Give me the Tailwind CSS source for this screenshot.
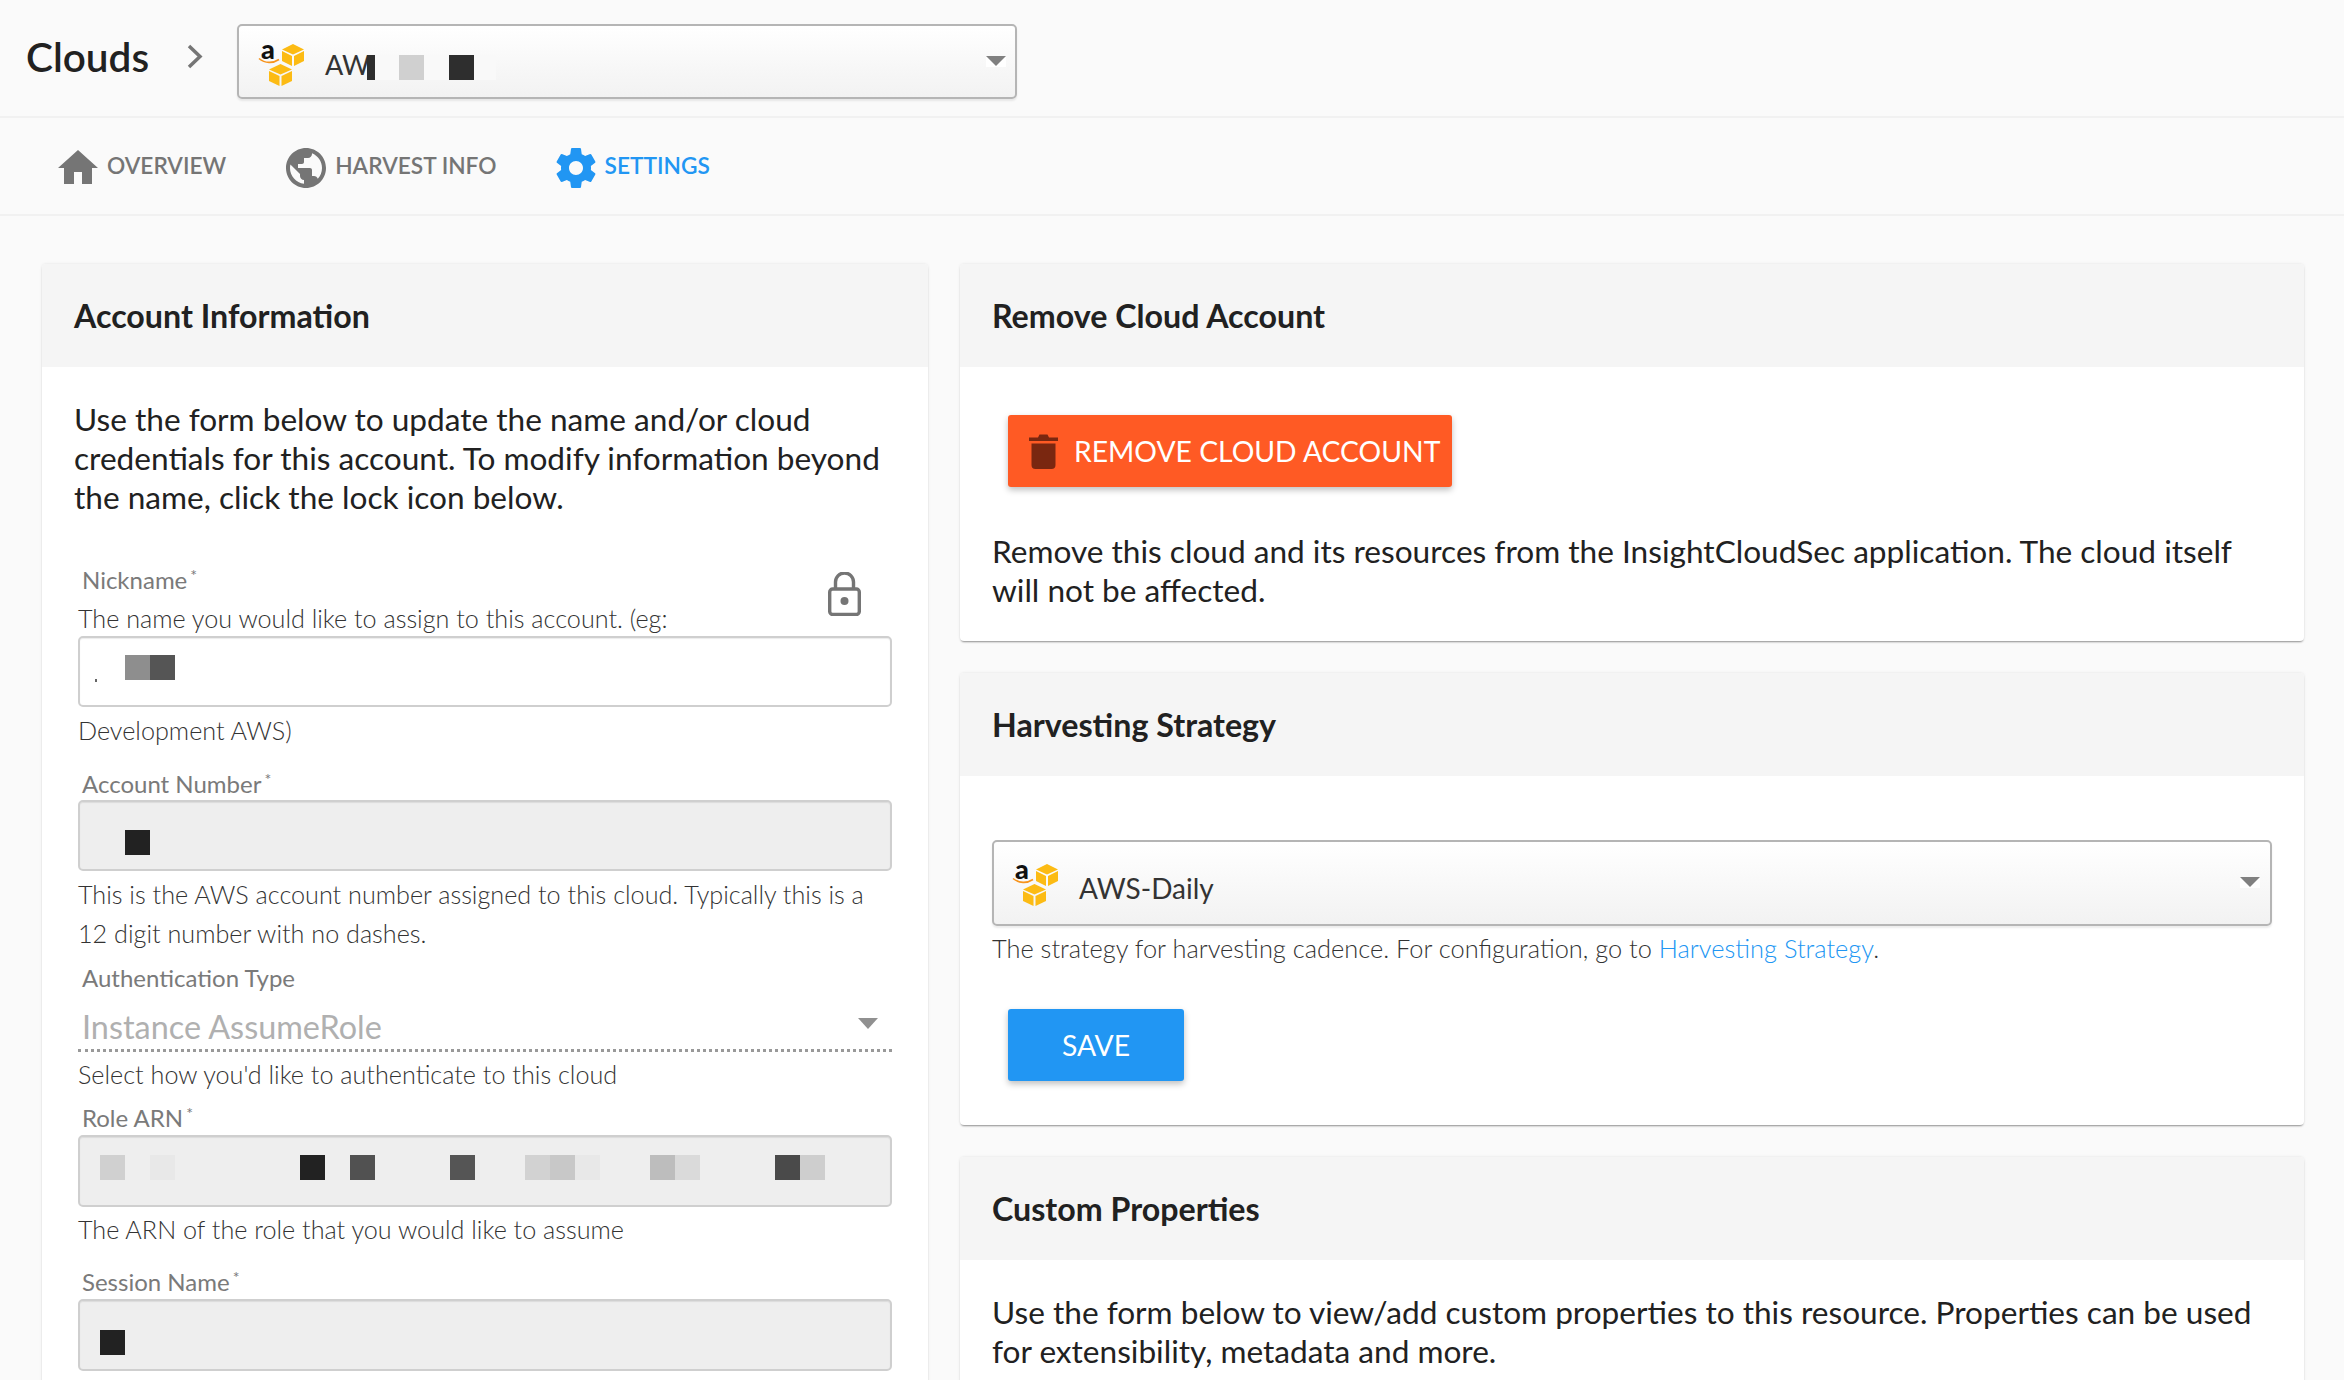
<!DOCTYPE html>
<html lang="en">
<head>
    <meta charset="UTF-8">
    <script src="https://cdn.jsdelivr.net/npm/@tailwindcss/browser@4"></script>
    <title>Clouds | Settings</title>
</head>
<body class="bg-[#fafafa] font-['Lato',sans-serif] text-[#212121]">
<div class="h-[1380px] overflow-hidden">
    <!-- top bar -->
    <div class="h-[118px] border-b-2 border-[#f1f1f1] flex items-center pb-[2px]">
        <h1 class="ml-[26px] w-[161px] text-[40.500px] font-semibold leading-none text-[#212121]">Clouds</h1>
        <svg class="w-[16px] h-[25px] -mt-[2px]" viewBox="0 0 16 25"><path d="M2 2l11 10.5L2 23" fill="none" stroke="#757575" stroke-width="3.5"/></svg>
        <div class="ml-[34px] w-[780px] h-[75px] self-start mt-[24px] border-2 border-[#b5b5b5] rounded-[5px] bg-linear-to-b from-white to-[#f2f2f2] shadow-[0_2px_2px_rgba(0,0,0,0.08)] flex items-start relative">
            <svg class="mt-[17px] ml-[19px] w-[46px] h-[44px] overflow-visible" viewBox="0 0 46 44">
                <text x="3" y="16" font-family="Lato" font-weight="900" font-size="27" fill="#111">a</text>
                <path d="M1 15.500c6 5 14 5 20 1" fill="none" stroke="#f7941d" stroke-width="1.6"/>
                <g fill="#fcbb14"><polygon points="35,1 46,6.500 35,11.500 24,6.500"/><polygon points="24,8 34,13 34,23 24,18"/><polygon points="46,8 36,13 36,23 46,18"/></g>
                <g fill="#fcbb14"><polygon points="22.500,21 34,26.500 22.500,31.500 11,26.500"/><polygon points="11,28 21.500,33 21.500,43 11,38"/><polygon points="34,28 23.500,33 23.500,43 34,38"/></g>
            </svg>
            <span class="ml-[21px] mt-[22px] text-[27px] leading-[34px] text-[#333] w-[42px]">AW</span>
            <div class="mt-[29px] flex h-[25px] w-[129px] bg-[#f9f9f9] relative">
                <i class="block w-[8px] bg-[#2e2e2e]"></i>
                <i class="block ml-[24px] w-[25px] bg-[#d0d0d0]"></i>
                <i class="block ml-[25px] w-[25px] bg-[#2e2e2e]"></i>
            </div>
            <div class="absolute right-[9px] top-[30px] w-[20px] h-[11px] bg-white">
                <svg class="w-[20px] h-[11px]" viewBox="0 0 20 11"><path d="M0 0h20L10 10z" fill="#808080"/></svg>
            </div>
        </div>
    </div>

    <!-- tabs -->
    <nav class="h-[98px] border-b-2 border-[#f1f1f1] flex items-start pl-[54px] text-[22.700px] font-semibold text-[#757575]">
        <a class="flex items-center mt-[26px]">
            <svg class="w-[48px] h-[48px]" viewBox="0 0 24 24" fill="#757575"><path d="M10 20v-6h4v6h5v-8h3L12 3 2 12h3v8z"/></svg>
            <span class="ml-[5px] -mt-[4px]">OVERVIEW</span>
        </a>
        <a class="flex items-center mt-[26px] ml-[56px]">
            <svg class="w-[48px] h-[48px]" viewBox="0 0 24 24" fill="#757575"><path d="M12 2C6.48 2 2 6.48 2 12s4.48 10 10 10 10-4.48 10-10S17.52 2 12 2zm-1 17.93c-3.95-.49-7-3.85-7-7.93 0-.62.08-1.21.21-1.79L9 15v1c0 1.1.9 2 2 2v1.93zm6.9-2.54c-.26-.81-1-1.39-1.9-1.39h-1v-3c0-.55-.45-1-1-1H8v-2h2c.55 0 1-.45 1-1V7h2c1.1 0 2-.9 2-2v-.41c2.93 1.19 5 4.06 5 7.41 0 2.08-.8 3.97-2.1 5.39z"/></svg>
            <span class="ml-[5px] -mt-[4px]">HARVEST INFO</span>
        </a>
        <a class="flex items-center mt-[26px] ml-[55px] text-[#2196f3]">
            <svg class="w-[48px] h-[48px]" viewBox="0 0 24 24" fill="#2196f3"><path d="M19.43 12.98c.04-.32.07-.64.07-.98s-.03-.66-.07-.98l2.11-1.65c.19-.15.24-.42.12-.64l-2-3.46c-.12-.22-.39-.3-.61-.22l-2.49 1c-.52-.4-1.08-.73-1.69-.98l-.38-2.65C14.46 2.18 14.25 2 14 2h-4c-.25 0-.46.18-.49.42l-.38 2.65c-.61.25-1.17.59-1.69.98l-2.49-1c-.23-.09-.49 0-.61.22l-2 3.46c-.13.22-.07.49.12.64l2.11 1.65c-.04.32-.07.65-.07.98s.03.66.07.98l-2.11 1.65c-.19.15-.24.42-.12.64l2 3.46c.12.22.39.3.61.22l2.49-1c.52.4 1.08.73 1.69.98l.38 2.65c.03.24.24.42.49.42h4c.25 0 .46-.18.49-.42l.38-2.65c.61-.25 1.17-.59 1.69-.98l2.49 1c.23.09.49 0 .61-.22l2-3.46c.12-.22.07-.49-.12-.64l-2.11-1.65zM12 15.5c-1.93 0-3.5-1.57-3.5-3.5s1.57-3.5 3.5-3.5 3.5 1.57 3.5 3.5-1.57 3.5-3.5 3.5z"/></svg>
            <span class="ml-[5px] -mt-[4px]">SETTINGS</span>
        </a>
    </nav>

    <main class="grid grid-cols-[886px_1344px] gap-x-[32px] pl-[42px] pt-[48px] items-start">
        <!-- left column -->
        <section class="bg-white rounded-[4px] shadow-[0_2px_2px_-1px_rgba(0,0,0,0.4),0_0_3px_rgba(0,0,0,0.1)]">
            <div class="h-[103px] bg-[#f5f5f5] rounded-t-[4px] pl-[32px] pt-[2px] flex items-center text-[32.200px] font-bold">Account Information</div>
            <div class="pt-[33px] pl-[32px] pr-[32px] pb-[40px]">
                <p class="text-[31.600px] leading-[39px]">Use the form below to update the name and/or cloud credentials for this account. To modify information beyond the name, click the lock icon below.</p>

                <div class="relative mt-[50px] ml-[4px] w-[814px]">
                    <svg class="absolute right-[31px] top-[5px] w-[33px] h-[44px]" viewBox="0 0 33 44">
                        <path d="M7.500 17V10a9 9 0 0 1 18 0v7" fill="none" stroke="#757575" stroke-width="3.400"/>
                        <rect x="1.700" y="17" width="29.600" height="25.500" rx="3" fill="none" stroke="#757575" stroke-width="3.400"/>
                        <circle cx="16.500" cy="29" r="4" fill="#757575"/>
                    </svg>
                    <label class="block pl-[4px] h-[26px] leading-[26px] text-[24px] text-[#7a7a7a]">Nickname<sup class="text-[16px] ml-[3px]">*</sup></label>
                    <p class="mt-[8px] h-[34px] leading-[34px] text-[25.200px] font-light text-[#333]">The name you would like to assign to this account. (eg:</p>
                    <div class="mt-[1px] h-[71px] border-2 border-[#cfcfcf] rounded-[5px] bg-white shadow-[inset_0_1px_1px_rgba(0,0,0,0.08)] flex items-start relative">
                        <i class="block mt-[41px] ml-[15px] w-[2px] h-[3px] bg-[#666]"></i>
                        <i class="block mt-[17px] ml-[28px] w-[25px] h-[25px] bg-[#8e8e8e]"></i>
                        <i class="block mt-[17px] w-[25px] h-[25px] bg-[#555]"></i>
                    </div>
                    <p class="mt-[4px] h-[39px] leading-[39px] text-[25.200px] font-light text-[#333]">Development AWS)</p>

                    <label class="block mt-[21px] pl-[4px] h-[26px] leading-[26px] text-[24px] text-[#7a7a7a]">Account Number<sup class="text-[16px] ml-[3px]">*</sup></label>
                    <div class="mt-[3px] h-[71px] border-2 border-[#cfcfcf] rounded-[5px] bg-[#eeeeee] shadow-[inset_0_1px_1px_rgba(0,0,0,0.08)] flex items-start">
                        <i class="block mt-[28px] ml-[45px] w-[25px] h-[25px] bg-[#222]"></i>
                    </div>
                    <p class="mt-[4px] leading-[39px] text-[25.200px] font-light text-[#333]">This is the AWS account number assigned to this cloud. Typically this is a<br>12 digit number with no dashes.</p>

                    <label class="block mt-[12px] pl-[4px] h-[26px] leading-[26px] text-[24px] text-[#7a7a7a]">Authentication Type</label>
                    <div class="mt-[16px] h-[45px] border-b-[3px] border-dotted border-[#999] flex items-start justify-between pl-[4px] pr-[14px]">
                        <span class="text-[32.400px] leading-[40px] text-[#b0b0b0]">Instance AssumeRole</span>
                        <svg class="mt-[11px] w-[20px] h-[11px]" viewBox="0 0 20 11"><path d="M0 0h20L10 11z" fill="#909090"/></svg>
                    </div>
                    <p class="mt-[3px] h-[39px] leading-[39px] text-[25.200px] font-light text-[#333]">Select how you'd like to authenticate to this cloud</p>

                    <label class="block mt-[11px] pl-[4px] h-[26px] leading-[26px] text-[24px] text-[#7a7a7a]">Role ARN<sup class="text-[16px] ml-[3px]">*</sup></label>
                    <div class="mt-[4px] h-[72px] border-2 border-[#cfcfcf] rounded-[5px] bg-[#eeeeee] shadow-[inset_0_1px_1px_rgba(0,0,0,0.08)] flex items-start pt-[18px] pl-[20px]">
                        <i class="block w-[25px] h-[25px] bg-[#d0d0d0]"></i>
                        <i class="block ml-[25px] w-[25px] h-[25px] bg-[#e8e8e8]"></i>
                        <i class="block ml-[125px] w-[25px] h-[25px] bg-[#222]"></i>
                        <i class="block ml-[25px] w-[25px] h-[25px] bg-[#515151]"></i>
                        <i class="block ml-[75px] w-[25px] h-[25px] bg-[#555]"></i>
                        <i class="block ml-[50px] w-[25px] h-[25px] bg-[#d2d2d2]"></i>
                        <i class="block w-[25px] h-[25px] bg-[#c8c8c8]"></i>
                        <i class="block w-[25px] h-[25px] bg-[#e8e8e8]"></i>
                        <i class="block ml-[50px] w-[25px] h-[25px] bg-[#bdbdbd]"></i>
                        <i class="block w-[25px] h-[25px] bg-[#dadada]"></i>
                        <i class="block ml-[75px] w-[25px] h-[25px] bg-[#4a4a4a]"></i>
                        <i class="block w-[25px] h-[25px] bg-[#cecece]"></i>
                    </div>
                    <p class="mt-[3px] h-[39px] leading-[39px] text-[25.200px] font-light text-[#333]">The ARN of the role that you would like to assume</p>

                    <label class="block mt-[20px] pl-[4px] h-[26px] leading-[26px] text-[24px] text-[#7a7a7a]">Session Name<sup class="text-[16px] ml-[3px]">*</sup></label>
                    <div class="mt-[4px] h-[72px] border-2 border-[#cfcfcf] rounded-[5px] bg-[#eeeeee] shadow-[inset_0_1px_1px_rgba(0,0,0,0.08)] flex items-start pt-[29px] pl-[20px]">
                        <i class="block w-[25px] h-[25px] bg-[#222]"></i>
                    </div>
                </div>
            </div>
        </section>

        <!-- right column -->
        <div class="flex flex-col gap-[32px]">
            <section class="bg-white rounded-[4px] shadow-[0_2px_2px_-1px_rgba(0,0,0,0.4),0_0_3px_rgba(0,0,0,0.1)]">
                <div class="h-[103px] bg-[#f5f5f5] rounded-t-[4px] pl-[32px] pt-[2px] flex items-center text-[32.200px] font-bold">Remove Cloud Account</div>
                <div class="pt-[48px] pl-[32px] pr-[32px] pb-[31px]">
                    <button class="ml-[16px] w-[444px] h-[72px] bg-[#ff5a24] rounded-[3px] shadow-[0_3px_6px_rgba(0,0,0,0.25)] flex items-center pl-[21px] text-white text-[28.300px] whitespace-nowrap">
                        <svg class="w-[29px] h-[36px] shrink-0" viewBox="0 0 29 36" fill="#7a2710"><path d="M0 4.500h9L10.500 1.500h8L20 4.500h9V8H0zM2.500 10.500h24V32a4 4 0 0 1-4 4h-16a4 4 0 0 1-4-4z"/></svg>
                        <span class="ml-[16px]">REMOVE CLOUD ACCOUNT</span>
                    </button>
                    <p class="mt-[45px] text-[31.600px] leading-[39px]">Remove this cloud and its resources from the InsightCloudSec application. The cloud itself will not be affected.</p>
                </div>
            </section>

            <section class="bg-white rounded-[4px] shadow-[0_2px_2px_-1px_rgba(0,0,0,0.4),0_0_3px_rgba(0,0,0,0.1)]">
                <div class="h-[103px] bg-[#f5f5f5] rounded-t-[4px] pl-[32px] pt-[2px] flex items-center text-[32.200px] font-bold">Harvesting Strategy</div>
                <div class="pt-[64px] pl-[32px] pr-[32px] pb-[44px]">
                    <div class="h-[86px] border-2 border-[#b5b5b5] rounded-[5px] bg-linear-to-b from-white to-[#f2f2f2] shadow-[0_2px_2px_rgba(0,0,0,0.08)] flex items-start relative">
                        <svg class="mt-[21px] ml-[18px] w-[46px] h-[44px] overflow-visible" viewBox="0 0 46 44">
                            <text x="3" y="16" font-family="Lato" font-weight="900" font-size="27" fill="#111">a</text>
                            <path d="M1 15.500c6 5 14 5 20 1" fill="none" stroke="#f7941d" stroke-width="1.6"/>
                            <g fill="#fcbb14"><polygon points="35,1 46,6.500 35,11.500 24,6.500"/><polygon points="24,8 34,13 34,23 24,18"/><polygon points="46,8 36,13 36,23 46,18"/></g>
                            <g fill="#fcbb14"><polygon points="22.500,21 34,26.500 22.500,31.500 11,26.500"/><polygon points="11,28 21.500,33 21.500,43 11,38"/><polygon points="34,28 23.500,33 23.500,43 34,38"/></g>
                        </svg>
                        <span class="ml-[21px] mt-[29px] text-[28px] leading-[34px] text-[#333]">AWS-Daily</span>
                        <div class="absolute right-[10px] top-[35px] w-[20px] h-[11px] bg-white">
                            <svg class="w-[20px] h-[11px]" viewBox="0 0 20 11"><path d="M0 0h20L10 10z" fill="#808080"/></svg>
                        </div>
                    </div>
                    <p class="mt-[3px] h-[39px] leading-[39px] text-[25.400px] font-light text-[#333]">The strategy for harvesting cadence. For configuration, go to <a class="text-[#2196f3]">Harvesting Strategy</a>.</p>
                    <button class="mt-[41px] ml-[16px] w-[176px] h-[72px] bg-[#2196f3] rounded-[3px] shadow-[0_3px_6px_rgba(0,0,0,0.25)] text-white text-[28.300px]">SAVE</button>
                </div>
            </section>

            <section class="bg-white rounded-[4px] shadow-[0_2px_2px_-1px_rgba(0,0,0,0.4),0_0_3px_rgba(0,0,0,0.1)]">
                <div class="h-[103px] bg-[#f5f5f5] rounded-t-[4px] pl-[32px] pt-[2px] flex items-center text-[32.200px] font-bold">Custom Properties</div>
                <div class="pt-[33px] pl-[32px] pr-[32px] pb-[29px]">
                    <p class="text-[31.600px] leading-[39px]">Use the form below to view/add custom properties to this resource. Properties can be used for extensibility, metadata and more.</p>
                </div>
            </section>
        </div>
    </main>
</div>
</body>
</html>
